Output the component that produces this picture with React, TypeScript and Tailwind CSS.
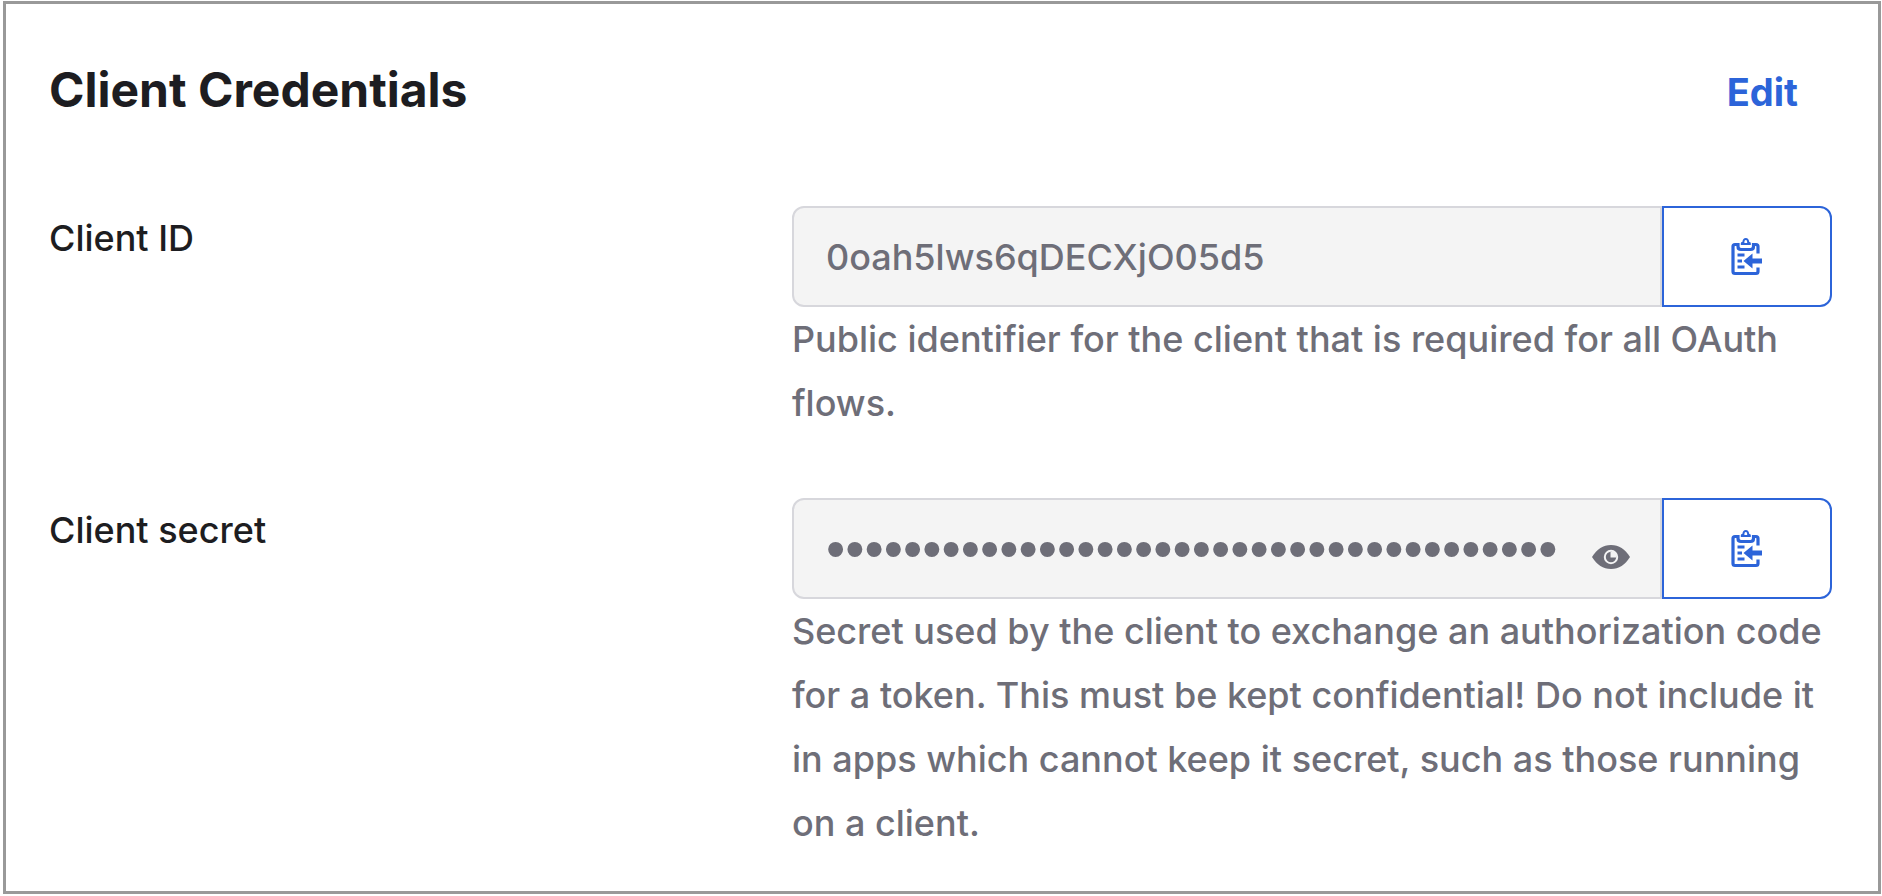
import { useId, type ReactNode } from "react";

function ClipboardIcon() {
  return (
    <svg viewBox="0 0 32 38" className="h-[38px] w-8" aria-hidden="true">
      <path
        d="M7 6.5H4Q2 6.5 2 8.5V33.500Q2 35.500 4 35.500H25Q27 35.500 27 33.500V29.500M23 6.500H25Q27 6.500 27 8.500V15.500M7 5V8.500Q7 11.500 10 11.500H19.500Q22.500 11.500 22.500 8.500V5"
        fill="none"
        stroke="currentColor"
        strokeWidth="3.2"
      />
      <path
        d="M9.800 7V5.200Q9.800 4 11.300 4C11.800 1.500 12.800 0 14.800 0S17.800 1.500 18.300 4Q19.800 4 19.800 5.200V7ZM14.800 2C13.600 2 13.400 3.300 13.400 5H16.200C16.200 3.300 16 2 14.800 2Z"
        fill="currentColor"
        fillRule="evenodd"
      />
      <path d="M6.500 15.500H13.500V18.500H6.500ZM6.500 21.500H11V24.500H6.500ZM6.500 27.500H13.500V30.500H6.500Z" fill="currentColor" />
      <path d="M12.500 23L21.500 15.500V20.500H31V25.500H21.500V30.500Z" fill="currentColor" />
    </svg>
  );
}

function EyeIcon() {
  return (
    <svg viewBox="0 0 38 24" className="h-6 w-[38px]" aria-hidden="true">
      <path d="M0 12C5 4 11 0 19 0S33 4 38 12C33 20 27 24 19 24S5 20 0 12Z" fill="currentColor" />
      <circle cx="19" cy="12" r="6.200" fill="none" stroke="#f4f4f4" strokeWidth="2" />
      <path d="M18.500 7V12.500H24V7Z" fill="#f4f4f4" />
    </svg>
  );
}

type CredentialProps = {
  label: string;
  value: string;
  secret?: boolean;
  children: ReactNode;
};

function Credential({ label, value, secret = false, children }: CredentialProps) {
  const id = useId();
  const valueStyle = secret
    ? "font-['Liberation_Sans',sans-serif] text-[55px]"
    : "text-[36px] font-medium";
  return (
    <div className="grid grid-cols-[5fr_7fr]">
      <label htmlFor={id} className="pt-2 text-[36px] leading-[48px] font-medium text-[#1d1d21]">
        {label}
      </label>
      <div>
        <div className="flex h-[101px]">
          <div className="flex min-w-0 flex-1 items-center rounded-l-xl border-2 border-[#d7d7dc] bg-[#f4f4f4] pr-[30px] pl-8">
            <input
              id={id}
              type={secret ? "password" : "text"}
              value={value}
              readOnly
              className={`min-w-0 flex-1 bg-transparent leading-[48px] text-[#6e6e78] outline-none ${valueStyle}`}
            />
            {secret && (
              <button type="button" aria-label="Show client secret" className="mt-4 ml-4 text-[#6e6e78]">
                <EyeIcon />
              </button>
            )}
          </div>
          <button
            type="button"
            aria-label={`Copy ${label}`}
            className="flex w-[170px] shrink-0 items-center justify-center rounded-r-xl border-2 border-[#2c64d9] bg-white text-[#2c64d9]"
          >
            <ClipboardIcon />
          </button>
        </div>
        <p className="text-[36px] leading-[64px] font-medium text-[#6e6e78]">{children}</p>
      </div>
    </div>
  );
}

export default function App() {
  return (
    <div className="min-h-screen bg-white pt-px pr-px pb-0.5 pl-[3px] font-['Inter',sans-serif]">
      <section className="border-[3px] border-[#999999] pt-[54px] pr-[46px] pb-9 pl-[43px]">
        <header className="mb-[84px] flex items-center justify-between pr-[34px]">
          <h1 className="text-[48px] leading-[64px] font-bold text-[#1d1d21]">Client Credentials</h1>
          <button type="button" className="pt-1 text-[38px] leading-[48px] font-bold text-[#2c64d9]">
            Edit
          </button>
        </header>
        <div className="flex flex-col gap-[63px]">
          <Credential label="Client ID" value="0oah5lws6qDECXjO05d5">
            Public identifier for the client that is required for all OAuth flows.
          </Credential>
          <Credential label="Client secret" value="0123456789abcdefghijklmnopqrstuvwxyzAB" secret>
            Secret used by the client to exchange an authorization code for a token. This must be kept
            confidential! Do not include it in apps which cannot keep it secret, such as those running on a
            client.
          </Credential>
        </div>
      </section>
    </div>
  );
}
